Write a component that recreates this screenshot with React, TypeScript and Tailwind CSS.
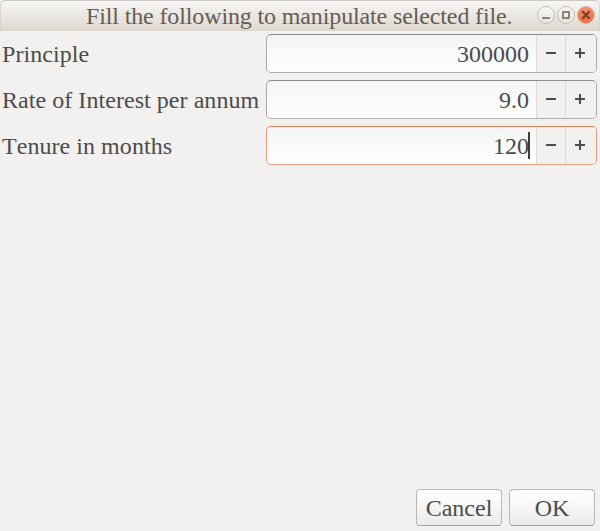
import React from "react";

type SpinFieldProps = { label: string; value: string; focused?: boolean };

function Stepper({ plus }: { plus?: boolean }) {
  return (
    <button className={`flex h-full shrink-0 items-center justify-center border-l border-[#dcdbda] bg-[#f1f0ef] ${plus ? "w-[31px] pr-[3px]" : "w-[29px] pr-px"}`}>
      <svg width="12" height="12" viewBox="0 0 12 12" className="mb-[2px]" shapeRendering="crispEdges" fill="#4c4c4c">
        <rect x="1" y="5" width="10" height="2" />
        {plus && <rect x="5" y="1" width="2" height="10" />}
      </svg>
    </button>
  );
}

function SpinField({ label, value, focused }: SpinFieldProps) {
  const frame = focused
    ? "border-[#e99a7b] border-t-[#e07f58] border-b-[#eda084]"
    : "border-[#a9a9a8] border-t-[#8d8d8c] border-b-[#b0b0af]";
  return (
    <div className="flex h-[39px] items-center">
      <label className="w-[264px] shrink-0 whitespace-nowrap pt-[2px] leading-[39px] tracking-[0.05px] [font-kerning:none]">{label}</label>
      <div className={`flex h-full w-[331px] overflow-hidden rounded-[5px] border bg-linear-to-b from-[#f4f4f4] to-white ${frame}`}>
        <div className="flex flex-1 items-center justify-end pr-[7px]">
          <span>{value}</span>
          {focused && <span className="-ml-px -mr-px h-[27px] w-[2px] bg-[#3c3c3c]" />}
        </div>
        <Stepper />
        <Stepper plus />
      </div>
    </div>
  );
}

function WindowButtons() {
  return (
    <svg width="60" height="20" viewBox="0 0 60 20" fill="none" className="mb-px">
      <defs>
        <linearGradient id="knob" x1="0" y1="0" x2="0" y2="1">
          <stop offset="0" stopColor="#faf9f8" />
          <stop offset="1" stopColor="#e5e0db" />
        </linearGradient>
        <linearGradient id="close" x1="0" y1="0" x2="0" y2="1">
          <stop offset="0" stopColor="#f3936d" />
          <stop offset="1" stopColor="#ee6d3e" />
        </linearGradient>
      </defs>
      <circle cx="10" cy="10" r="8.5" fill="url(#knob)" stroke="#c3beb9" />
      <circle cx="30" cy="10" r="8.5" fill="url(#knob)" stroke="#c3beb9" />
      <circle cx="50" cy="10" r="8.5" fill="url(#close)" stroke="#d0b5a8" />
      <path d="M6 13h8" stroke="#8b8378" strokeWidth="2" />
      <rect x="27" y="7" width="6" height="6" stroke="#8b8378" strokeWidth="2" />
      <path d="M46.3 6.3l7.4 7.4M53.7 6.3l-7.4 7.4" stroke="#7b4030" strokeWidth="2.3" />
    </svg>
  );
}

function DialogButton({ children }: { children: React.ReactNode }) {
  return (
    <button className="flex h-[37px] w-[86px] items-center justify-center rounded-[4px] border border-[#b7b6b5] border-b-[#a09f9e] bg-linear-to-b from-white to-[#ececeb] shadow-[0_0_0_1px_#f5f4f3]">
      {children}
    </button>
  );
}

export default function App() {
  return (
    <div className="flex h-[531px] w-[600px] flex-col overflow-hidden bg-[#f2f1f0] font-['Liberation_Serif',serif] text-[24px] text-[#4c4c4c]">
      <header className="flex h-[31px] shrink-0 items-center rounded-t-[6px] border border-[#d9d3cc] border-t-[#cbc7c3] bg-linear-to-b from-[#f7f6f5] to-[#dfd8d1] text-[#655d54]">
        <h1 className="w-[535px] shrink-0 whitespace-nowrap pl-[85px] pt-[2px] leading-[29px] tracking-[-0.13px] [font-feature-settings:'liga'_1]">Fill the following to manipulate selected file.</h1>
        <WindowButtons />
      </header>
      <main className="flex flex-1 flex-col gap-[7px] pl-[2px] pt-[3px]">
        <SpinField label="Principle" value="300000" />
        <SpinField label="Rate of Interest per annum" value="9.0" />
        <SpinField label="Tenure in months" value="120" focused />
      </main>
      <footer className="flex justify-end gap-[7px] pb-[5px] pr-[5px]">
        <DialogButton>Cancel</DialogButton>
        <DialogButton>OK</DialogButton>
      </footer>
    </div>
  );
}
